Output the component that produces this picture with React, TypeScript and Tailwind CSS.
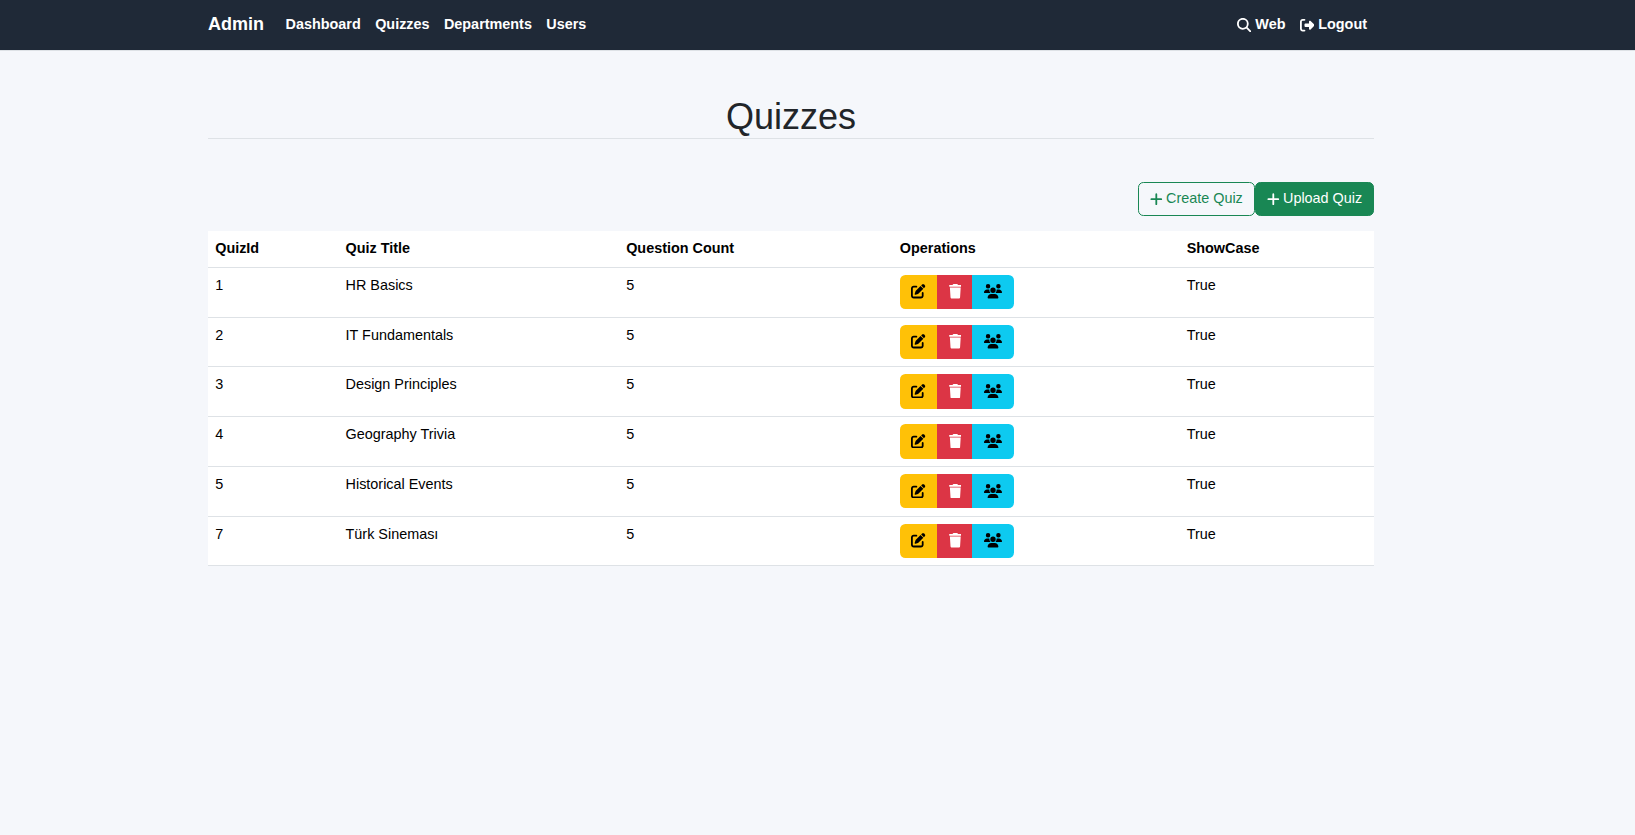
import React from "react";
import { FaMagnifyingGlass, FaRightFromBracket, FaPlus, FaPenToSquare, FaTrash, FaUsers } from "react-icons/fa6";

const quizzes = [
  { id: 1, title: "HR Basics", questions: 5, showcase: "True" },
  { id: 2, title: "IT Fundamentals", questions: 5, showcase: "True" },
  { id: 3, title: "Design Principles", questions: 5, showcase: "True" },
  { id: 4, title: "Geography Trivia", questions: 5, showcase: "True" },
  { id: 5, title: "Historical Events", questions: 5, showcase: "True" },
  { id: 7, title: "Türk Sineması", questions: 5, showcase: "True" },
];

function Navbar() {
  return (
    <nav className="border-b border-[#dee2e6] bg-[#1f2937] font-bold text-white">
      <div className="ml-[208px] flex h-[50px] w-[1166px] items-center pr-[7px]">
        <a className="mr-[21.6px] text-[18px]">Admin</a>
        <div className="flex gap-[14.4px]">
          <a>Dashboard</a>
          <a>Quizzes</a>
          <a>Departments</a>
          <a>Users</a>
        </div>
        <div className="ml-auto flex gap-[14.4px]">
          <a className="flex items-center gap-1">
            <FaMagnifyingGlass className="size-[14.4px]" />
            Web
          </a>
          <a className="flex items-center gap-1">
            <FaRightFromBracket className="size-[14.4px]" />
            Logout
          </a>
        </div>
      </div>
    </nav>
  );
}

function Operations() {
  return (
    <div className="flex h-[34.4px] w-fit overflow-hidden rounded-[5.4px]">
      <button className="flex w-[37px] items-center justify-center bg-[#ffc107] pb-px text-black">
        <FaPenToSquare className="size-[14.4px]" />
      </button>
      <button className="flex w-[35px] items-center justify-center bg-[#dc3545] pb-px pl-[1.5px] text-white">
        <FaTrash className="h-[14.4px] w-[12.6px]" />
      </button>
      <button className="flex w-[42px] items-center justify-center bg-[#0dcaf0] pb-px text-black">
        <FaUsers className="h-[14.4px] w-[18px]" />
      </button>
    </div>
  );
}

export default function App() {
  return (
    <div className="min-h-screen bg-[#f5f7fb] font-['Liberation_Sans',Arial,sans-serif] text-[14.4px] leading-[21.6px] text-[#212529]">
      <Navbar />
      <main className="ml-[208px] w-[1166px] pt-[44px]">
        <h1 className="border-b border-[#dee2e6] text-center text-[36px] leading-[43px]">Quizzes</h1>
        <div className="mt-[43px] mb-[14.4px] flex justify-end">
          <button className="flex h-[34.4px] items-center gap-[3.5px] rounded-[5.4px] border border-[#198754] pr-[10.8px] pl-[11.3px] text-[#198754]">
            <FaPlus className="mb-px h-[14.4px] w-[12.6px]" />
            Create Quiz
          </button>
          <button className="flex h-[34.4px] items-center gap-[3.5px] rounded-[5.4px] border border-[#198754] bg-[#198754] pr-[10.8px] pl-[11.3px] text-white">
            <FaPlus className="mb-px h-[14.4px] w-[12.6px]" />
            Upload Quiz
          </button>
        </div>
        <table className="w-full table-fixed border-collapse bg-white text-left text-black">
          <colgroup>
            <col className="w-[130.4px]" />
            <col className="w-[280.6px]" />
            <col className="w-[273.7px]" />
            <col className="w-[286.8px]" />
            <col />
          </colgroup>
          <thead>
            <tr className="border-b border-[#dee2e6]">
              <th className="p-[7.2px]">QuizId</th>
              <th className="p-[7.2px]">Quiz Title</th>
              <th className="p-[7.2px]">Question Count</th>
              <th className="p-[7.2px]">Operations</th>
              <th className="p-[7.2px]">ShowCase</th>
            </tr>
          </thead>
          <tbody>
            {quizzes.map((quiz) => (
              <tr key={quiz.id} className="border-b border-[#dee2e6] align-top">
                <td className="p-[7.2px]">{quiz.id}</td>
                <td className="p-[7.2px]">{quiz.title}</td>
                <td className="p-[7.2px]">{quiz.questions}</td>
                <td className="p-[7.2px]"><Operations /></td>
                <td className="p-[7.2px]">{quiz.showcase}</td>
              </tr>
            ))}
          </tbody>
        </table>
      </main>
    </div>
  );
}
